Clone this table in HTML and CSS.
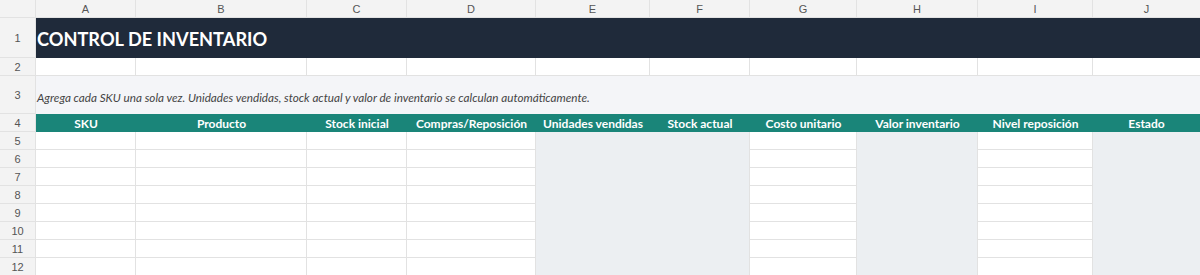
FILE: index.html
```html
<!DOCTYPE html>
<html lang="es">
<head>
<meta charset="utf-8">
<title>Control de inventario</title>
<link rel="stylesheet" href="styles.css">
</head>
<body>
<div class="sheet">
  <div class="corner"></div>
  <div class="colhead">A</div>
  <div class="colhead">B</div>
  <div class="colhead">C</div>
  <div class="colhead">D</div>
  <div class="colhead">E</div>
  <div class="colhead">F</div>
  <div class="colhead">G</div>
  <div class="colhead">H</div>
  <div class="colhead">I</div>
  <div class="colhead">J</div>

  <div class="rowhead">1</div>
  <div class="title">CONTROL DE INVENTARIO</div>

  <div class="rowhead">2</div>
  <div class="cell"></div><div class="cell"></div><div class="cell"></div><div class="cell"></div><div class="cell"></div>
  <div class="cell"></div><div class="cell"></div><div class="cell"></div><div class="cell"></div><div class="cell"></div>

  <div class="rowhead">3</div>
  <div class="note">Agrega cada SKU una sola vez. Unidades vendidas, stock actual y valor de inventario se calculan automáticamente.</div>

  <div class="rowhead">4</div>
  <div class="headers">
    <div class="h">SKU</div>
    <div class="h">Producto</div>
    <div class="h">Stock inicial</div>
    <div class="h">Compras/Reposición</div>
    <div class="h">Unidades vendidas</div>
    <div class="h">Stock actual</div>
    <div class="h">Costo unitario</div>
    <div class="h">Valor inventario</div>
    <div class="h">Nivel reposición</div>
    <div class="h">Estado</div>
  </div>

  <div class="calc calc-ef"></div>
  <div class="calc calc-h"></div>
  <div class="calc calc-j"></div>

  <div class="rowhead">5</div>
  <div class="cell"></div><div class="cell"></div><div class="cell"></div><div class="cell"></div><div class="cell"></div><div class="cell"></div>
  <div class="rowhead">6</div>
  <div class="cell"></div><div class="cell"></div><div class="cell"></div><div class="cell"></div><div class="cell"></div><div class="cell"></div>
  <div class="rowhead">7</div>
  <div class="cell"></div><div class="cell"></div><div class="cell"></div><div class="cell"></div><div class="cell"></div><div class="cell"></div>
  <div class="rowhead">8</div>
  <div class="cell"></div><div class="cell"></div><div class="cell"></div><div class="cell"></div><div class="cell"></div><div class="cell"></div>
  <div class="rowhead">9</div>
  <div class="cell"></div><div class="cell"></div><div class="cell"></div><div class="cell"></div><div class="cell"></div><div class="cell"></div>
  <div class="rowhead">10</div>
  <div class="cell"></div><div class="cell"></div><div class="cell"></div><div class="cell"></div><div class="cell"></div><div class="cell"></div>
  <div class="rowhead">11</div>
  <div class="cell"></div><div class="cell"></div><div class="cell"></div><div class="cell"></div><div class="cell"></div><div class="cell"></div>
  <div class="rowhead">12</div>
  <div class="cell"></div><div class="cell"></div><div class="cell"></div><div class="cell"></div><div class="cell"></div><div class="cell"></div>
</div>
</body>
</html>
```

FILE: styles.css
```css
* { box-sizing: border-box; }
html, body { margin: 0; padding: 0; background: #ffffff; }
body { overflow: hidden; }

.sheet {
  display: grid;
  grid-template-columns: 35px 99px 170px 99px 128px 113px 99px 106px 120px 114px 107px;
  grid-template-rows: 17px 39px 17px 37px 17px repeat(8, 17px);
  gap: 1px;
  background: #e2e2e2;
  width: 1200px;
  font-family: "Lato", "Liberation Sans", sans-serif;
}

.corner, .colhead, .rowhead {
  background: #f3f3f3;
  color: #555555;
  font-family: "Liberation Sans", Arial, sans-serif;
  font-size: 11px;
  display: flex;
  align-items: center;
  justify-content: center;
}
.colhead { padding-top: 1px; }
.rowhead { grid-column: 1; }

.cell { background: #ffffff; }

.title {
  grid-column: 2 / -1;
  background: #1f2a3a;
  color: #ffffff;
  font-weight: 700;
  font-size: 18.2px;
  display: flex;
  align-items: center;
  padding-left: 1px;
  padding-top: 1px;
  margin-bottom: -1px;
}

.note {
  grid-column: 2 / -1;
  background: #f4f5f8;
  color: #444444;
  font-style: italic;
  font-size: 11.7px;
  display: flex;
  align-items: center;
  padding-left: 1px;
  padding-top: 4px;
  margin-bottom: -1px;
}

.headers {
  grid-column: 2 / -1;
  background: #1a8579;
  display: grid;
  grid-template-columns: 100px 171px 100px 129px 114px 100px 107px 121px 115px 107px;
  margin-bottom: -1px;
}
.h {
  color: #ffffff;
  font-weight: 700;
  font-size: 12px;
  display: flex;
  align-items: center;
  justify-content: center;
  white-space: nowrap;
}

.calc { background: #eceff2; grid-row: 6 / 14; }
.calc-ef { grid-column: 6 / 8; }
.calc-h { grid-column: 9; }
.calc-j { grid-column: 11; }
```
